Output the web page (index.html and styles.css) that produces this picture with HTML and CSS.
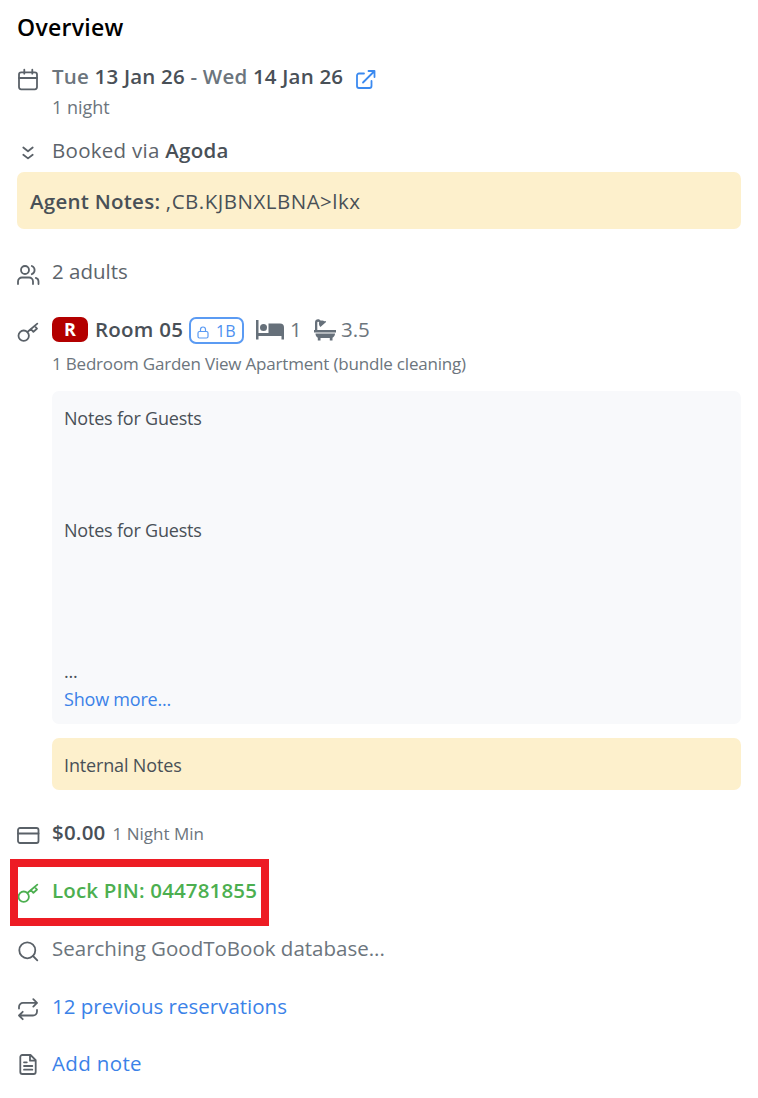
FILE: index.html
```html
<!DOCTYPE html>
<html lang="en">
<head>
  <meta charset="UTF-8">
  <meta name="viewport" content="width=device-width, initial-scale=1.0">
  <title>Overview</title>
  <link rel="stylesheet" href="styles.css">
</head>
<body>

  <!-- shared icons -->
  <svg class="sprite">
    <symbol id="key" viewBox="0 0 24 24">
      <circle cx="7.7" cy="15.7" r="5.2"/>
      <path d="M11.4 12L21.3 3.6M14.8 9l2.6 2.9L21 8.5l-2.5-2.6"/>
    </symbol>
  </svg>

  <div class="overview">
    <h2>Overview</h2>

    <div class="row dates">
      <svg class="icon" viewBox="0 0 24 24"><rect x="3" y="5.3" width="18" height="17" rx="2.2"/><path d="M3 11h18M8.3 2.7v4M16.3 2.7v4"/></svg>
      <div class="text date-text">Tue <b>13 Jan 26</b> - Wed <b>14 Jan 26</b></div>
      <svg class="icon link-icon" viewBox="0 0 24 24"><path d="M10 6.500H5a2 2 0 0 0-2 2V19a2 2 0 0 0 2 2h10.500a2 2 0 0 0 2-2V14M14.500 4H20.500V10M9 15.500L20.500 4"/></svg>
    </div>
    <div class="nights">1 night</div>

    <div class="row booked">
      <svg class="icon" viewBox="0 0 24 24"><path d="M7.3 6.5l4.7 3.7 4.7-3.7M7.3 13.7l4.7 3.7 4.7-3.7"/></svg>
      <div class="text booked-text">Booked via <b>Agoda</b></div>
    </div>
    <div class="agent-notes"><b>Agent Notes:</b> <span class="agent-value">,CB.KJBNXLBNA&gt;lkx</span></div>

    <div class="row guests">
      <svg class="icon" viewBox="0 0 24 24"><circle cx="9" cy="8" r="4"/><path d="M2 22v-2.500a4 4 0 0 1 4-4h7a4 4 0 0 1 4 4V22M15.800 4a4.400 4.400 0 0 1 0 8.200M19.800 15.900a3.800 3.800 0 0 1 2.700 3.600V22"/></svg>
      <div class="text">2 adults</div>
    </div>

    <div class="row room">
      <svg class="icon"><use href="#key"/></svg>
      <span class="badge-r">R</span>
      <b class="room-name">Room 05</b>
      <span class="badge-lock">
        <svg class="lock" viewBox="0 0 12 13"><rect x="1" y="5.5" width="10" height="6.5" rx="1.5"/><path d="M3.5 5.5V3.5a2.5 2.5 0 0 1 5 0v2"/></svg>
        1B
      </span>
      <svg class="bed" viewBox="0 0 28 20"><path d="M0 0h2.500v13H28v6.500h-2.500V16H2.500v3.500H0z"/><circle cx="7.500" cy="7.500" r="3.500"/><path d="M12.500 3.500H24a4 4 0 0 1 4 4V15H12.500z"/></svg>
      <span class="beds">1</span>
      <svg class="bath" viewBox="0 0 22 22"><path d="M0 11h22v2.500H0zM1.500 14.500h19.500c0 2-1 3.500-2.500 4.200V21.500h-2.700V19H6.500v2.500H3.800v-2.800c-1.500-.7-2.300-2.200-2.300-4.200z"/><path d="M1 11V3.500C1 1.300 2.300.2 4 .2c1.300 0 2.300.6 2.900 1.600 1.300-.5 2.600-.2 3.500.5l1.200-.3.5.9-5.700 5-.8-.8C5 5.600 4.700 4.300 5.200 3.300 4.900 2.500 3.300 2.300 3.300 3.800V11z"/></svg>
      <span class="baths">3.5</span>
    </div>

    <div class="details">
      <div class="room-type">1 Bedroom Garden View Apartment (bundle cleaning)</div>
      <div class="guest-notes"><p>Notes for Guests



Notes for Guests




...</p><a href="#">Show more...</a></div>
      <div class="internal-notes">Internal Notes</div>
    </div>

    <div class="row price">
      <svg class="icon" viewBox="0 0 24 24"><rect x="2" y="5" width="20.5" height="15" rx="2"/><path d="M2 10.5h20.5"/></svg>
      <b class="amount">$0.00</b>
      <span class="min-stay">1 Night Min</span>
    </div>

    <div class="row pin">
      <svg class="icon"><use href="#key"/></svg>
      <b class="pin-text">Lock PIN: 044781855</b>
      <div class="highlight"></div>
    </div>

    <div class="row">
      <svg class="icon" viewBox="0 0 24 24"><circle cx="11.3" cy="11.3" r="8"/><path d="M17 17l4.3 4.3"/></svg>
      <div class="text search-text">Searching GoodToBook database...</div>
    </div>

    <div class="row">
      <svg class="icon" viewBox="0 0 24 24"><path d="M17.3 2.200l3.700 3.700-3.700 3.700M3 11.500V9.900a4 4 0 0 1 4-4h14M6.700 22.200L3 18.500l3.700-3.700M21 13v1.500a4 4 0 0 1-4 4H3"/></svg>
      <a class="prev-link" href="#">12 previous reservations</a>
    </div>

    <div class="row">
      <svg class="icon" viewBox="0 0 24 24"><path d="M14.500 1H6.300a2 2 0 0 0-2 2v15a2 2 0 0 0 2 2h11.400a2 2 0 0 0 2-2V6.200zM14 1v5.700h5.700M8 8.300h2.800M8 12h8.300M8 15.700h8.300"/></svg>
      <a class="add-link" href="#">Add note</a>
    </div>
  </div>

</body>
</html>
```
FILE: styles.css
```css
body {
  margin: 0;
  background-color: #fff;
  color: #6c757d;
  font-family: "Open Sans", "Noto Sans", sans-serif;
  font-size: 20.5px;
  line-height: 28px;
}
.overview {
  padding: 12px 17px 0;
}
h2 {
  margin: 0;
  color: #000;
  font-size: 23px;
  font-weight: 600;
  letter-spacing: 0.3px;
  line-height: 30px;
}
b {
  color: #495057;
  font-weight: 600;
}
a {
  color: #3b82e8;
  text-decoration: none;
}
.sprite {
  display: block;
  width: 0;
  height: 0;
}
.row {
  display: flex;
  height: 30px;
  margin-bottom: 27.7px;
  white-space: nowrap;
}
.icon {
  flex: none;
  width: 24px;
  height: 24px;
  margin: 5px 12px 0 -1px;
  overflow: visible;
  fill: none;
  stroke: #5a6168;
  stroke-width: 1.8;
  stroke-linecap: round;
  stroke-linejoin: round;
}
.row.dates {
  margin: 20px 0 0;
}
.date-text {
  font-weight: 600;
  letter-spacing: 0.2px;
}
.link-icon {
  margin: 5px 0 0 11px;
  stroke: #3b8af0;
}
.nights {
  margin: 0 0 14px 35px;
  font-size: 18px;
  line-height: 30px;
}
.row.booked {
  margin-bottom: 6px;
}
.booked-text {
  letter-spacing: 0.28px;
}
.booked-text,
.guests .text {
  color: #5d646b;
}
.agent-notes {
  height: 57px;
  margin-bottom: 28px;
  padding: 15px 13px 0;
  box-sizing: border-box;
  border-radius: 7px;
  background-color: #fdf0cc;
  color: #495057;
  letter-spacing: 0.25px;
}
.agent-value {
  letter-spacing: 0.5px;
}
.row.room {
  margin-bottom: 2px;
}
.badge-r {
  width: 36px;
  height: 25px;
  margin: 2px 7px 0 0;
  border-radius: 7px;
  background-color: #b30000;
  color: #fff;
  font-size: 18px;
  font-weight: 700;
  line-height: 25px;
  text-align: center;
}
.room-name {
  width: 94px;
  letter-spacing: 0.25px;
}
.badge-lock {
  display: flex;
  width: 55px;
  height: 27px;
  margin: 2px 12px 0 0;
  padding-left: 6px;
  box-sizing: border-box;
  border: 2px solid #5b9bf3;
  border-radius: 7px;
  color: #4c8ff0;
  font-size: 16px;
  line-height: 24px;
}
.lock {
  width: 12px;
  height: 13px;
  margin: 7px 7px 0 0;
  fill: none;
  stroke: #5b9bf3;
  stroke-width: 1.2;
}
.bed {
  width: 28px;
  height: 20px;
  margin: 5px 6px 0 0;
  fill: #66707a;
}
.beds {
  width: 24px;
}
.bath {
  width: 22px;
  height: 22px;
  margin: 4px 5px 0 0;
  fill: #66707a;
}
.details {
  margin: 0 0 28px 35px;
  font-size: 18px;
  line-height: 28.1px;
}
.room-type {
  margin-bottom: 10px;
  font-size: 17px;
  letter-spacing: -0.19px;
  line-height: 34px;
}
.guest-notes {
  height: 333px;
  margin-bottom: 14px;
  padding: 13px 12px;
  box-sizing: border-box;
  border-radius: 7px;
  background-color: #f8f9fb;
  color: #495057;
  letter-spacing: -0.2px;
}
.guest-notes p {
  margin: 0;
  white-space: pre-line;
}
.internal-notes {
  height: 52px;
  padding: 13px 12px;
  box-sizing: border-box;
  border-radius: 7px;
  background-color: #fdf0cc;
  color: #495057;
  letter-spacing: -0.15px;
}
.row.price {
  margin-bottom: 28.5px;
}
.amount {
  letter-spacing: 0.2px;
}
.min-stay {
  margin: 1px 0 0 7px;
  font-size: 17px;
  line-height: 30px;
}
.row.pin {
  position: relative;
}
.pin .icon {
  stroke: #4caf50;
}
.pin-text {
  color: #4caf50;
  letter-spacing: 0.15px;
}
.highlight {
  position: absolute;
  top: -17px;
  left: -7px;
  width: 259px;
  height: 67px;
  box-sizing: border-box;
  border: 8px solid #ed1c24;
}
.add-link {
  letter-spacing: 0.35px;
}
```
